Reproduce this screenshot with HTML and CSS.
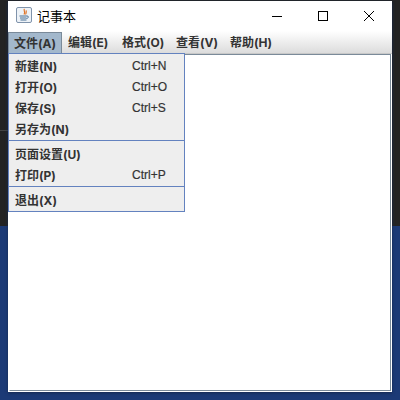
FILE: index.html
```html
<!DOCTYPE html>
<html lang="zh">
<head>
  <meta charset="UTF-8">
  <title>记事本</title>
  <link rel="stylesheet" href="styles.css">
</head>
<body>
  <div class="desktop">
    <div class="desk-top"></div>
    <div class="desk-bottom"></div>
    <div class="desk-line"></div>

    <div class="window">
      <div class="titlebar">
        <svg class="app-icon" width="16" height="16" viewBox="0 0 16 16">
          <rect x="0.5" y="0.5" width="15" height="15" rx="1.5" fill="#edf2f7" stroke="#7f93ab"/>
          <path d="M8.5 2C7 3.5 10 4.5 8 7.5M10.5 3.5C9.5 4.5 11 5.5 9.5 7.5" fill="none" stroke="#e0762a" stroke-width="1.2"/>
          <path d="M3.5 9h7.5M4 11h6.5M4.5 13h6" fill="none" stroke="#4a7096" stroke-width="1.1"/>
          <path d="M11 9c2 0 2 2-.5 2.5" fill="none" stroke="#4a7096"/>
        </svg>
        <span class="title">记事本</span>
        <div class="win-buttons">
          <div class="win-btn">
            <svg width="12" height="12" viewBox="0 0 12 12"><path d="M1 6.5h10" stroke="#000" fill="none"/></svg>
          </div>
          <div class="win-btn">
            <svg width="12" height="12" viewBox="0 0 12 12"><rect x="1.5" y="1.5" width="9" height="9" stroke="#000" fill="none"/></svg>
          </div>
          <div class="win-btn">
            <svg width="12" height="12" viewBox="0 0 12 12"><path d="M1 1l10 10M11 1L1 11" stroke="#000" fill="none"/></svg>
          </div>
        </div>
      </div>

      <div class="menubar">
        <div class="menu active">文件(A)</div>
        <div class="menu">编辑(E)</div>
        <div class="menu">格式(O)</div>
        <div class="menu">查看(V)</div>
        <div class="menu">帮助(H)</div>
      </div>

      <div class="editor"></div>

      <div class="popup">
        <div class="item"><span>新建(N)</span><span class="key">Ctrl+N</span></div>
        <div class="item"><span>打开(O)</span><span class="key">Ctrl+O</span></div>
        <div class="item"><span>保存(S)</span><span class="key">Ctrl+S</span></div>
        <div class="item"><span>另存为(N)</span></div>
        <div class="sep"></div>
        <div class="item"><span>页面设置(U)</span></div>
        <div class="item"><span>打印(P)</span><span class="key">Ctrl+P</span></div>
        <div class="sep"></div>
        <div class="item"><span>退出(X)</span></div>
      </div>
    </div>
  </div>
</body>
</html>
```

FILE: styles.css
```css
html, body {
  margin: 0;
  padding: 0;
}

.desktop {
  position: relative;
  width: 400px;
  height: 400px;
  overflow: hidden;
  display: flex;
  flex-direction: column;
  font-family: Inter, "Noto Sans CJK SC", sans-serif;
}

.desk-top {
  height: 226px;
  background: #232323;
}

.desk-bottom {
  flex: 1;
  background: #1c3a76;
}

.desk-line {
  position: absolute;
  left: 0;
  top: 130px;
  width: 8px;
  height: 1px;
  background: #444;
}

.window {
  position: absolute;
  left: 8px;
  top: 1px;
  width: 384px;
  height: 391px;
  background: #fff;
  display: flex;
  flex-direction: column;
  box-shadow: 0 1px 3px #15294f;
}

.titlebar {
  height: 30px;
  flex-shrink: 0;
  display: flex;
  align-items: center;
  padding-left: 8px;
  background: #fff;
}

.app-icon {
  margin-right: 5px;
  margin-bottom: 2px;
}

.title {
  font-size: 13px;
  color: #000;
  margin-bottom: 2px;
}

.win-buttons {
  margin-left: auto;
  display: flex;
}

.win-btn {
  width: 46px;
  height: 30px;
  display: flex;
  align-items: center;
  justify-content: center;
}

.menubar {
  height: 23px;
  flex-shrink: 0;
  display: flex;
  background: linear-gradient(#fff, #dcdcdc);
  border-bottom: 1px solid #c8c8c8;
  box-sizing: border-box;
}

.menu {
  height: 21px;
  margin-top: 1px;
  padding: 0 6px;
  width: 42px;
  font-size: 12px;
  font-weight: 700;
  line-height: 22px;
  color: #333;
  white-space: nowrap;
}

.menu.active {
  background: #a3b8cc;
  border: 1px solid #7a8a99;
  border-bottom: 0;
  box-sizing: content-box;
  padding: 0 5px 0 5px;
  height: 21px;
  line-height: 21px;
}

.editor {
  flex: 1;
  background: #fff;
  border: 1px solid #7a8a99;
  border-left-color: #fff;
  margin: 0 1px 1px 1px;
}

.popup {
  position: absolute;
  left: 0;
  top: 52px;
  width: 175px;
  background: #eeeeee;
  border: 1px solid #6382bf;
  padding: 1px 0;
}

.item {
  height: 21px;
  display: flex;
  align-items: center;
  padding-left: 6px;
  font-size: 12px;
  font-weight: 700;
  color: #333;
}

.key {
  position: absolute;
  left: 123px;
  font-family: "Liberation Sans", sans-serif;
  font-weight: normal;
  -webkit-text-stroke: 0.2px #333;
}

.sep {
  height: 1px;
  background: #6382bf;
  margin: 1px 0 2px;
}
```
